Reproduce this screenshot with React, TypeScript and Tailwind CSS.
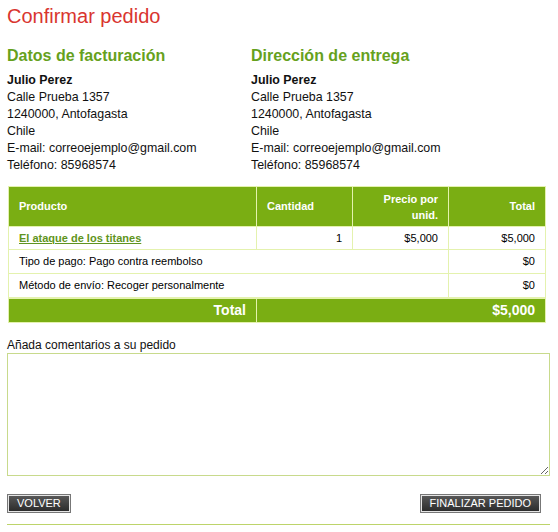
import React from 'react'

const font = { fontFamily: '"Liberation Sans", Arial, sans-serif' }

function AddressBlock({ title }: { title: string }) {
  return (
    <div className="w-[244px]">
      <h2 className="text-[16px] font-bold leading-5 text-[#66a11c]">{title}</h2>
      <div className="mt-[6px] text-[12.4px] leading-[17px] text-[#111]">
        <p className="font-bold">Julio Perez</p>
        <p>Calle Prueba 1357</p>
        <p>1240000, Antofagasta</p>
        <p>Chile</p>
        <p>E-mail: correoejemplo@gmail.com</p>
        <p>Teléfono: 85968574</p>
      </div>
    </div>
  )
}

function DarkButton({ label }: { label: string }) {
  return (
    <button className="h-[19px] border border-[#777] bg-gradient-to-b from-[#5a5a5a] to-[#2a2a2a] outline outline-1 -outline-offset-2 outline-[#e5e5e5]">
      <span className="block px-[9px] text-[11px] leading-[15px] text-white">{label}</span>
    </button>
  )
}

export default function App() {
  const cell = 'border border-[#e4f2ae] px-[10px]'
  return (
    <div style={font} className="w-[558px] h-[532px] bg-white px-[7px] pt-[4px] text-[#111]">
      <h1 className="text-[20px] leading-6 text-[#d9352f]">Confirmar pedido</h1>

      <div className="mt-[18px] flex gap-0">
        <AddressBlock title="Datos de facturación" />
        <AddressBlock title="Dirección de entrega" />
      </div>

      <table className="mt-[12px] ml-[1px] w-[538px] border-collapse border border-[#e4f2ae] text-[11px]">
        <thead>
          <tr className="h-[40px] bg-[#7aae13] font-bold text-white">
            <th className={`${cell} w-[248px] text-left`}>Producto</th>
            <th className={`${cell} w-[96px] text-left`}>Cantidad</th>
            <th className={`${cell} w-[96px] text-right leading-[16px]`}>
              Precio por
              <br />
              unid.
            </th>
            <th className={`${cell} text-right`}>Total</th>
          </tr>
        </thead>
        <tbody className="text-black">
          <tr className="h-[23px]">
            <td className={cell}>
              <a href="#" className="font-bold text-[#5f9420] underline">
                El ataque de los titanes
              </a>
            </td>
            <td className={`${cell} text-right`}>1</td>
            <td className={`${cell} text-right`}>$5,000</td>
            <td className={`${cell} text-right`}>$5,000</td>
          </tr>
          <tr className="h-[24px]">
            <td className={cell} colSpan={3}>
              Tipo de pago: Pago contra reembolso
            </td>
            <td className={`${cell} text-right`}>$0</td>
          </tr>
          <tr className="h-[24px]">
            <td className={cell} colSpan={3}>
              Método de envío: Recoger personalmente
            </td>
            <td className={`${cell} text-right`}>$0</td>
          </tr>
          <tr className="h-[25px] border-t-2 border-[#e4f2ae] bg-[#7aae13] text-[14px] font-bold text-white">
            <td className={`${cell} text-right`}>Total</td>
            <td className={`${cell} text-right`} colSpan={3}>
              $5,000
            </td>
          </tr>
        </tbody>
      </table>

      <p className="mt-[14px] text-[12px] leading-[16px]">Añada comentarios a su pedido</p>
      <textarea className="block h-[123px] w-[543px] resize-y border border-[#c8da8c] outline-none" />

      <div className="mt-[18px] flex items-center justify-between pr-[10px]">
        <DarkButton label="VOLVER" />
        <DarkButton label="FINALIZAR PEDIDO" />
      </div>

      <div className="mt-[11px] h-[1px] w-[543px] bg-[#bdd46a]" />
    </div>
  )
}
